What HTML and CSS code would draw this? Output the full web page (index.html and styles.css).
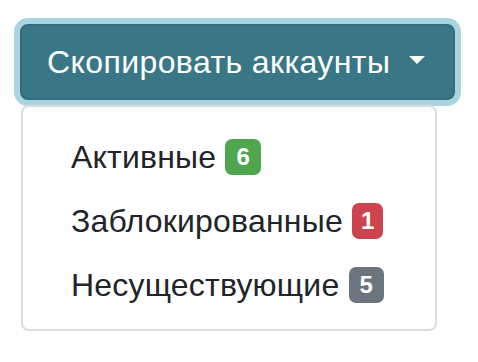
FILE: index.html
```html
<!DOCTYPE html>
<html lang="ru">
<head>
<meta charset="utf-8">
<link rel="stylesheet" href="styles.css">
</head>
<body>
<div class="page">
  <div class="dropdown">
    <button class="btn">Скопировать аккаунты<span class="caret"></span></button>
    <div class="menu">
      <a class="item">Активные <span class="badge badge-green">6</span></a>
      <a class="item">Заблокированные <span class="badge badge-red">1</span></a>
      <a class="item">Несуществующие <span class="badge badge-gray">5</span></a>
    </div>
  </div>
</div>
</body>
</html>
```
FILE: styles.css
```css
html, body {
  margin: 0;
  padding: 0;
  background: #ffffff;
}
.page {
  padding: 24px 0 0 20px;
  font-family: "Liberation Sans", Arial, sans-serif;
  font-size: 32px;
  color: #212529;
}
.dropdown {
  display: inline-flex;
  flex-direction: column;
  align-items: flex-start;
}
.btn {
  display: inline-flex;
  align-items: center;
  box-sizing: border-box;
  width: 435px;
  height: 76px;
  padding: 0 24px 0 25px;
  font-family: inherit;
  font-size: 32px;
  letter-spacing: 0.4px;
  color: #ffffff;
  background: #3a7786;
  border: 2px solid #346c7a;
  border-radius: 8px;
  box-shadow: 0 0 0 6px #a9d5e0;
}
.caret {
  display: inline-block;
  margin-left: 19px;
  width: 0;
  height: 0;
  border-top: 8px solid #ffffff;
  border-left: 8.5px solid transparent;
  border-right: 8.5px solid transparent;
  position: relative;
  top: -2px;
}
.menu {
  box-sizing: border-box;
  width: 416px;
  margin: 5px 0 0 1px;
  padding: 15px 0;
  border: 2px solid #dcdcdc;
  border-radius: 8px;
  background: #ffffff;
  display: flex;
  flex-direction: column;
}
.item {
  display: block;
  padding: 11px 48px 5px;
  line-height: 48px;
  letter-spacing: 0.2px;
  white-space: nowrap;
  color: #212529;
}
.badge {
  display: inline-block;
  box-sizing: border-box;
  height: 36px;
  padding: 0 11px;
  border-radius: 7px;
  font-size: 24px;
  font-weight: 700;
  line-height: 36px;
  letter-spacing: 0;
  color: #ffffff;
  text-align: center;
  vertical-align: 3px;
}
.badge-red { padding: 0 9px; }
.badge-green { background: #4fa64f; }
.badge-red { background: #cc444d; }
.badge-gray { background: #6c757d; }
```
